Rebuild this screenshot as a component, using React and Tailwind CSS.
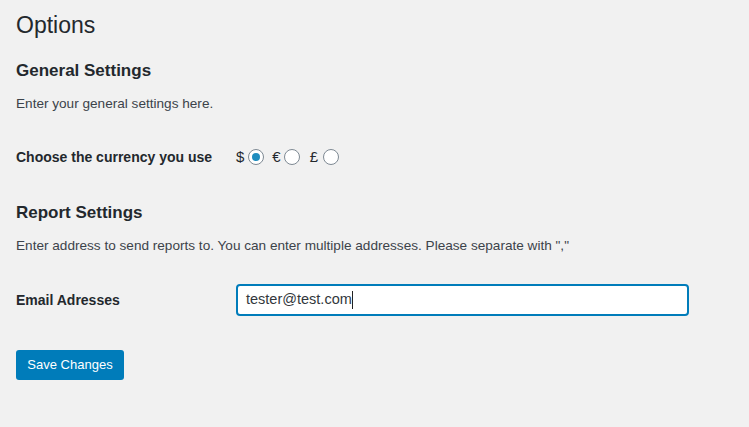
function Radio({ checked }) {
  return (
    <span className="flex w-[16px] h-[16px] rounded-full border border-[#7e8993] bg-white items-center justify-center">
      {checked && <span className="w-[8px] h-[8px] rounded-full bg-[#1e8cbe]" />}
    </span>
  );
}

export default function App() {
  return (
    <div className="min-h-[427px] bg-[#f1f1f1] px-[16px] pt-[10px] text-[#23282d] font-['Liberation_Sans',Arial,sans-serif]">
      <h1 className="text-[23px] leading-[30px] font-normal">Options</h1>

      <h2 className="mt-[20px] text-[17px] leading-[22px] font-semibold">General Settings</h2>
      <p className="mt-[13px] text-[13.6px] leading-[18px] text-[#3c434a]">Enter your general settings here.</p>

      <div className="mt-[28px] flex items-center h-[32px]">
        <div className="w-[220px] text-[14px] font-semibold">Choose the currency you use</div>
        <div className="flex items-center text-[15px]">
          <span>$</span>
          <span className="ml-[4px] flex"><Radio checked /></span>
          <span className="ml-[8px]">€</span>
          <span className="ml-[3px] flex"><Radio /></span>
          <span className="ml-[10px]">£</span>
          <span className="ml-[5px] flex"><Radio /></span>
        </div>
      </div>

      <h2 className="mt-[29px] text-[17px] leading-[22px] font-semibold">Report Settings</h2>
      <p className="mt-[13px] text-[13.6px] leading-[18px] text-[#3c434a]">
        Enter address to send reports to. You can enter multiple addresses. Please separate with ","
      </p>

      <div className="mt-[29px] flex items-center h-[32px]">
        <div className="w-[220px] text-[14px] font-semibold">Email Adresses</div>
        <div className="w-[453px] h-[32px] border-2 border-[#007cba] rounded-[4px] bg-white flex items-center pl-[8px] text-[14.5px] text-[#32373c]">
          <span>tester@test.com</span>
          <span className="w-px h-[18px] bg-[#222]" />
        </div>
      </div>

      <button className="mt-[34px] h-[30px] w-[108px] rounded-[3px] bg-[#007cba] text-white text-[13px]">
        Save Changes
      </button>
    </div>
  );
}
